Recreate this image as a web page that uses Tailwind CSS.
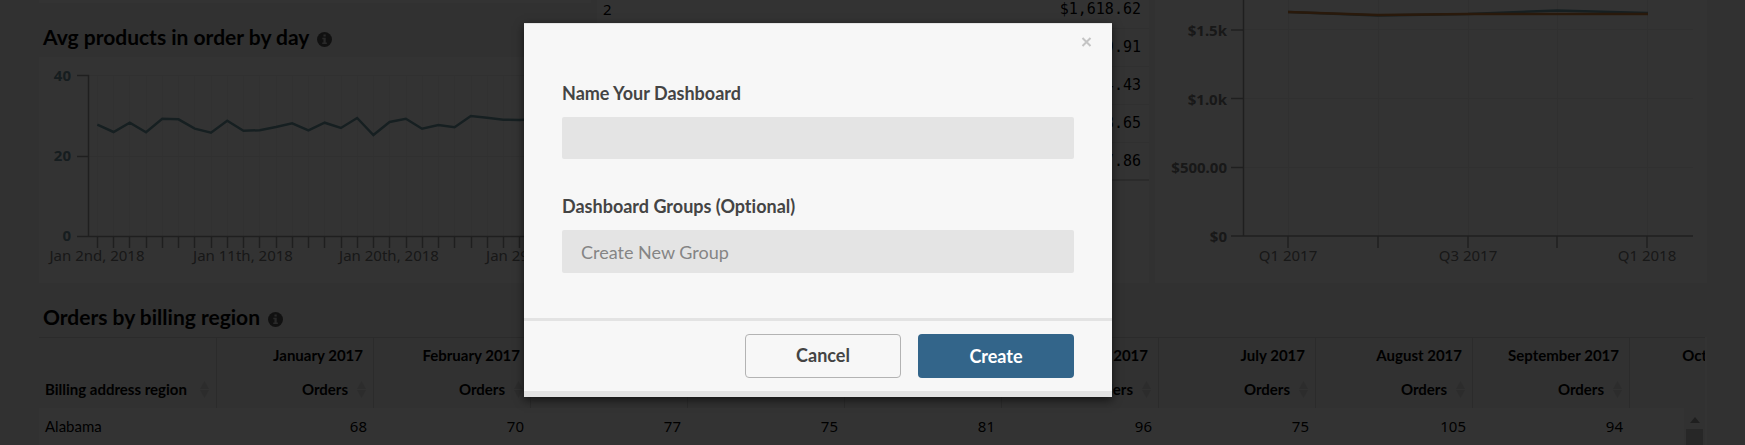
<!DOCTYPE html>
<html lang="en">
<head>
<meta charset="utf-8">
<title>Dashboard</title>
<script src="https://cdn.jsdelivr.net/npm/@tailwindcss/browser@4"></script>
</head>
<body class="relative h-screen overflow-hidden bg-[#f2f2f2] font-['Lato',sans-serif] text-black [font-variant-ligatures:none]">

<main class="flex h-screen flex-col overflow-hidden pl-[39px] pr-[38px]">
  <div class="grid shrink-0 grid-cols-3 gap-[6px]">
    <section>
      <div class="h-[3px] bg-white"></div>
      <h2 class="flex h-[54px] items-center gap-2 pl-1 pt-[14px] text-[21px] font-bold">Avg products in order by day
        <svg class="mt-1 size-[15px]" viewBox="0 0 16 16"><circle cx="8" cy="8" r="8" fill="#555"/><path d="M6.9 2.6h2.4v2.2H6.9zM5.7 6.2h3.6v4.9h1.2v1.6H5.6v-1.6h1.3V7.8H5.7z" fill="#ccc"/></svg>
      </h2>
      <div class="bg-white">
        <svg class="block h-auto w-full" viewBox="0 0 552 226" font-family="Noto Sans, sans-serif" font-size="15">
          <g id="days"></g>
          <path d="M49 18.5H552M49 99.5H552" stroke="#efefef"/>
          <path d="M38 18.5H49.5V179.5M38 99.5H49M38 179.5H552" fill="none" stroke="#999" stroke-width="1.5"/>
          <polyline id="avg" fill="none" stroke="#6e9ba5" stroke-width="2.5"/>
          <g font-weight="700" fill="#6e8f99" text-anchor="end"><text x="32" y="24">40</text><text x="32" y="104">20</text><text x="32" y="184">0</text></g>
          <g fill="#777" text-anchor="middle"><text x="58" y="204">Jan 2nd, 2018</text><text x="204" y="204">Jan 11th, 2018</text><text x="350" y="204">Jan 20th, 2018</text><text x="497" y="204">Jan 29th, 2018</text></g>
        </svg>
      </div>
    </section>

    <section class="h-[283px] overflow-hidden bg-white">
      <table class="-mt-[10px] w-full text-[15px]">
        <tbody class="font-['DejaVu_Sans_Mono',monospace]">
          <tr class="h-[38px] border-b border-[#ededed]"><td class="pl-[6px] font-['Noto_Sans',sans-serif]">2</td><td class="pr-2 text-right">$1,618.62</td></tr>
          <tr class="h-[38px] border-b border-[#ededed]"><td class="pl-[6px] font-['Noto_Sans',sans-serif]">3</td><td class="pr-2 text-right">$1,609.91</td></tr>
          <tr class="h-[38px] border-b border-[#ededed]"><td class="pl-[6px] font-['Noto_Sans',sans-serif]">4</td><td class="pr-2 text-right">$1,604.43</td></tr>
          <tr class="h-[38px] border-b border-[#ededed]"><td class="pl-[6px] font-['Noto_Sans',sans-serif]">5</td><td class="pr-2 text-right">$1,598.65</td></tr>
          <tr class="h-[38px] border-b-2 border-[#d8d8d8]"><td class="pl-[6px] font-['Noto_Sans',sans-serif]">6</td><td class="pr-2 text-right">$1,587.86</td></tr>
        </tbody>
      </table>
    </section>

    <section class="bg-white">
      <svg class="block h-auto w-full" viewBox="0 0 552 283" font-family="Noto Sans, sans-serif" font-size="15">
        <path d="M133.5 0V236M223.5 0V236M313.5 0V236M402.5 0V236M492.5 0V236M88 29.5H538M88 98.5H538M88 167.5H538" stroke="#efefef"/>
        <path d="M76 30H88M76 98.5H88M76 167.5H88M88.5 0V236M76 236H538M133 236V248M223 236V248M313 236V248M402 236V248M492 236V248" fill="none" stroke="#999" stroke-width="1.5"/>
        <polyline points="133,12 223,15.5 313,14 402,10.5 493,13" fill="none" stroke="#6e9ba5" stroke-width="2.5"/>
        <polyline points="133,12 223,15 313,14 402,14 493,14" fill="none" stroke="#cd7d37" stroke-width="2.5"/>
        <g font-weight="700" fill="#777" text-anchor="end"><text x="72" y="36">$1.5k</text><text x="72" y="105">$1.0k</text><text x="72" y="173">$500.00</text><text x="72" y="242">$0</text></g>
        <g fill="#777" text-anchor="middle"><text x="133" y="261">Q1 2017</text><text x="313" y="261">Q3 2017</text><text x="492" y="261">Q1 2018</text></g>
      </svg>
    </section>
  </div>

  <section class="flex min-h-0 grow flex-col">
    <h2 class="flex h-[54px] shrink-0 items-center gap-2 pl-1 pt-[14px] text-[21px] font-bold">Orders by billing region
      <svg class="mt-1 size-[15px]" viewBox="0 0 16 16"><circle cx="8" cy="8" r="8" fill="#555"/><path d="M6.9 2.6h2.4v2.2H6.9zM5.7 6.2h3.6v4.9h1.2v1.6H5.6v-1.6h1.3V7.8H5.7z" fill="#ccc"/></svg>
    </h2>
    <div class="min-h-0 grow bg-white pr-[2px]">
      <div class="relative h-full overflow-hidden">
        <table class="w-[1905px] table-fixed border-separate border-spacing-0 text-[15px] leading-5">
          <colgroup><col class="w-[178px]"><col span="11" class="w-[157px]"></colgroup>
          <thead id="head" class="bg-[#f2f2f2]"></thead>
          <tbody><tr id="row" class="h-[35px]"></tr></tbody>
        </table>
        <div class="absolute top-[71px] right-0 bottom-0 flex w-[21px] flex-col items-center bg-[#f4f4f4] pt-[9px]">
          <svg class="h-[6px] w-[10px] shrink-0" viewBox="0 0 10 6"><path d="M5 0l5 6H0z" fill="#999"/></svg>
          <div class="mt-[6px] w-[17px] grow bg-[#c1c1c1]"></div>
        </div>
      </div>
    </div>
  </section>
</main>

<div class="absolute inset-0 flex items-start justify-center bg-black/80 pt-[23px] pr-[109px]">
  <form role="dialog" aria-label="Create dashboard" class="w-[588px] border-t border-b-[6px] border-t-[#e4e4e4] border-b-[#e3e3e3] bg-[#f7f7f7] text-[18px] text-[#444] shadow-[0_3px_9px_rgba(0,0,0,0.6)]">
    <div class="flex justify-end pt-[13px] pr-5">
      <button type="button" aria-label="Close" class="size-[11px]"><svg class="size-[11px]" viewBox="0 0 11 11"><path d="M1.5 1l8 8M9.500 1l-8 8" stroke="#c4c4c4" stroke-width="2"/></svg></button>
    </div>
    <div class="flex flex-col px-[38px] pt-[33px] pb-[45px]">
      <label for="name" class="h-9 leading-6 font-bold">Name Your Dashboard</label>
      <input id="name" type="text" class="h-[42px] rounded-xs bg-[#e4e4e4] px-[19px]">
      <label for="group" class="mt-[35px] h-9 leading-6 font-bold">Dashboard Groups (Optional)</label>
      <input id="group" type="text" placeholder="Create New Group" class="h-[43px] rounded-xs bg-[#e4e4e4] px-[19px] placeholder:text-[#858585]">
    </div>
    <div class="flex justify-end gap-[17px] border-t-[3px] border-[#e3e3e3] px-[38px] py-[13px]">
      <button type="button" class="h-11 w-[156px] rounded border border-[#b3b3b3] pb-[2px] font-bold">Cancel</button>
      <button type="submit" class="h-11 w-[156px] rounded bg-[#33658a] font-bold text-white">Create</button>
    </div>
  </form>
</div>

<script>
const avg = [124.7,132,122.7,132.3,118.7,119.3,128.7,132.7,120.7,130.8,130.2,127,123.3,130.3,122.7,128,118,135,122,118.7,128.7,125,127.3,116,117.7,119.7,120,119,123,121,125];
document.getElementById('avg').setAttribute('points', avg.map((y, i) => `${58.3 + i * 16.24},${y - 57}`).join(' '));
document.getElementById('days').innerHTML = avg.map((_, i) => {
  const x = Math.round(58 + i * 16.24) + 0.5;
  return `<path d="M${x} 19V179" stroke="#f4f4f4"/><path d="M${x} 180V191" stroke="#999" stroke-width="1.5"/>`;
}).join('');

const sort = '<svg class="h-[17px] w-[9px]" viewBox="0 0 9 17"><path d="M4.5 0L9 8H0zM4.5 17L9 9H0z" fill="#dcdcdc"/></svg>';
const months = ['January','February','March','April','May','June','July','August','September','October'];
const orders = [68,70,77,75,81,96,75,105,94,''];
const edge = 'border-r border-[#d6d6d6]';
document.getElementById('head').innerHTML =
  `<tr class="h-[35px]"><th class="border-t ${edge}"></th>` + months.map(m => `<th class="border-t ${edge} pr-[10px] text-right font-bold">${m} 2017</th>`).join('') + '</tr>' +
  `<tr class="h-[36px]"><th class="${edge} pb-[2px] pl-[6px]"><div class="flex items-center justify-between pr-[7px]">Billing address region${sort}</div></th>` +
  months.map(() => `<th class="${edge} pb-[2px]"><div class="flex items-center justify-end gap-[9px] pr-[7px]">Orders${sort}</div></th>`).join('') + '</tr>';
document.getElementById('row').innerHTML = '<td class="pl-[6px]">Alabama</td>' +
  orders.map(n => `<td class="pr-[7px] text-right font-['Noto_Sans',sans-serif]">${n}</td>`).join('');
</script>
</body>
</html>
